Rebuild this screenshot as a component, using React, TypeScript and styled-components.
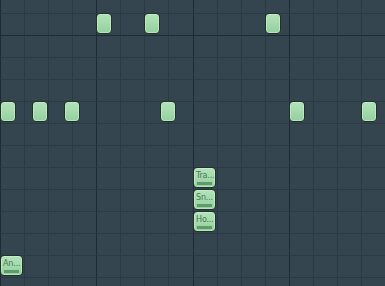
import React from "react";
import styled, { createGlobalStyle } from "styled-components";

const COLS = 16;
const ROWS = 14;
const ROW_H = 22;
const COL_W = 385 / COLS;

const GlobalStyle = createGlobalStyle`
  html, body {
    margin: 0;
    padding: 0;
    background: #35454f;
    overflow: hidden;
  }
`;

interface Note {
  col: number;
  row: number;
  label?: string;
}

// col is in grid steps (fractions are triplet positions)
const notes: Note[] = [
  { col: 4, row: 1 },
  { col: 6, row: 1 },
  { col: 11, row: 1 },
  { col: 0, row: 5 },
  { col: 4 / 3, row: 5 },
  { col: 8 / 3, row: 5 },
  { col: 20 / 3, row: 5 },
  { col: 12, row: 5 },
  { col: 15, row: 5 },
  { col: 8, row: 8, label: "Tra..." },
  { col: 8, row: 9, label: "Sn..." },
  { col: 8, row: 10, label: "Ho..." },
  { col: 0, row: 12, label: "An..." },
];

const App = () => (
  <>
    <GlobalStyle />
    <Viewport>
      <Grid>
        {Array.from({ length: ROWS * COLS }, (_, i) => {
          const row = Math.floor(i / COLS);
          const col = i % COLS;
          return <Cell key={i} $barStart={col % 4 === 0} $octave={row === 2} />;
        })}
      </Grid>
      <NoteLayer>
        {notes.map((n, i) => (
          <NoteBlock
            key={i}
            $wide={!!n.label}
            style={{ left: Math.round(n.col * COL_W), top: n.row * ROW_H }}
          >
            {n.label && (
              <>
                <NoteLabel>{n.label}</NoteLabel>
                <Velocity />
              </>
            )}
          </NoteBlock>
        ))}
      </NoteLayer>
    </Viewport>
  </>
);

export default App;

const Viewport = styled.div`
  position: relative;
  width: 385px;
  height: 286px;
  overflow: hidden;
  background: #35454f;
`;

const Grid = styled.div`
  display: grid;
  grid-template-columns: repeat(${COLS}, 1fr);
  grid-auto-rows: ${ROW_H}px;
  margin-top: -9px;
  width: 385px;
`;

const Cell = styled.div<{ $barStart: boolean; $octave: boolean }>`
  box-sizing: border-box;
  border-left: 1px solid ${(p) => (p.$barStart ? "#1f2b33" : "#2c3a44")};
  border-top: 1px solid ${(p) => (p.$octave ? "#1f2b33" : "#2c3a44")};
`;

const NoteLayer = styled.div`
  position: absolute;
  left: 0;
  top: -9px;
  right: 0;
  bottom: 0;
`;

const NoteBlock = styled.div<{ $wide: boolean }>`
  position: absolute;
  box-sizing: border-box;
  width: ${(p) => (p.$wide ? 23 : 16)}px;
  height: 21px;
  border: 1px solid #22302a;
  border-radius: 4px;
  background: linear-gradient(#b2e3b9, #94d09e);
  box-shadow: inset 0 0 0 1px rgba(215, 248, 220, 0.5);
  display: flex;
  flex-direction: column;
  justify-content: space-between;
  padding: 2px 2px 2px;
  overflow: hidden;
`;

const NoteLabel = styled.span`
  font-family: "DejaVu Sans Condensed", "Liberation Sans", sans-serif;
  font-size: 9px;
  line-height: 10px;
  color: #4f7657;
  white-space: nowrap;
  letter-spacing: -0.2px;
`;

const Velocity = styled.div`
  height: 3px;
  margin: 0 1px;
  background: #5e9a6a;
`;
